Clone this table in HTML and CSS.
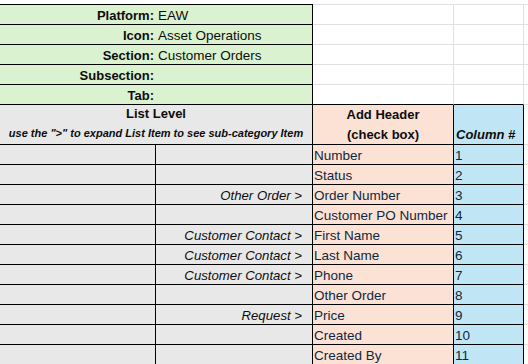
FILE: index.html
```html
<!DOCTYPE html>
<html>
<head>
<meta charset="utf-8">
<link rel="stylesheet" href="styles.css">
</head>
<body>
<div class="sheet">
  <div class="row meta first">
    <div class="c lab">Platform:</div><div class="c val">EAW</div><div class="c blank"></div><div class="c blank"></div><div class="c edge"></div>
  </div>
  <div class="row meta">
    <div class="c lab">Icon:</div><div class="c val">Asset Operations</div><div class="c blank"></div><div class="c blank"></div><div class="c edge"></div>
  </div>
  <div class="row meta">
    <div class="c lab">Section:</div><div class="c val">Customer Orders</div><div class="c blank"></div><div class="c blank"></div><div class="c edge"></div>
  </div>
  <div class="row meta">
    <div class="c lab">Subsection:</div><div class="c val"></div><div class="c blank"></div><div class="c blank"></div><div class="c edge"></div>
  </div>
  <div class="row meta last">
    <div class="c lab">Tab:</div><div class="c val"></div><div class="c blank"></div><div class="c blank"></div><div class="c edge"></div>
  </div>
  <div class="row head">
    <div class="c list-head">
      <div class="lh-title">List Level</div>
      <div class="lh-note">use the "&gt;" to expand List Item to see sub-category Item</div>
    </div>
    <div class="c add-head"><div>Add Header</div><div>(check box)</div></div>
    <div class="c num-head">Column #</div>
    <div class="c edge"></div>
  </div>

  <div class="row body"><div class="c g1"></div><div class="c g2"></div><div class="c hdr">Number</div><div class="c num">1</div><div class="c edge"></div></div>
  <div class="row body"><div class="c g1"></div><div class="c g2"></div><div class="c hdr">Status</div><div class="c num">2</div><div class="c edge"></div></div>
  <div class="row body"><div class="c g1"></div><div class="c g2">Other Order &gt;</div><div class="c hdr">Order Number</div><div class="c num">3</div><div class="c edge"></div></div>
  <div class="row body"><div class="c g1"></div><div class="c g2"></div><div class="c hdr">Customer PO Number</div><div class="c num">4</div><div class="c edge"></div></div>
  <div class="row body"><div class="c g1"></div><div class="c g2">Customer Contact &gt;</div><div class="c hdr">First Name</div><div class="c num">5</div><div class="c edge"></div></div>
  <div class="row body"><div class="c g1"></div><div class="c g2">Customer Contact &gt;</div><div class="c hdr">Last Name</div><div class="c num">6</div><div class="c edge"></div></div>
  <div class="row body"><div class="c g1"></div><div class="c g2">Customer Contact &gt;</div><div class="c hdr">Phone</div><div class="c num">7</div><div class="c edge"></div></div>
  <div class="row body"><div class="c g1"></div><div class="c g2"></div><div class="c hdr">Other Order</div><div class="c num">8</div><div class="c edge"></div></div>
  <div class="row body"><div class="c g1"></div><div class="c g2">Request &gt;</div><div class="c hdr">Price</div><div class="c num">9</div><div class="c edge"></div></div>
  <div class="row body"><div class="c g1"></div><div class="c g2"></div><div class="c hdr">Created</div><div class="c num">10</div><div class="c edge"></div></div>
  <div class="row body"><div class="c g1"></div><div class="c g2"></div><div class="c hdr">Created By</div><div class="c num">11</div><div class="c edge"></div></div>
</div>
</body>
</html>
```

FILE: styles.css
```css
html, body {
  margin: 0;
  padding: 0;
  background: #ffffff;
}

body {
  font-family: "Liberation Sans", Arial, sans-serif;
  color: #0d0d0d;
  overflow: hidden;
}

.sheet {
  padding-top: 4px;
}

.row {
  display: grid;
  grid-template-columns: 156px 157px 141px 70px 1fr;
  height: 20px;
}

.row.first {
  height: 21px;
}

.row.head {
  height: 40px;
}

.c {
  box-sizing: border-box;
  border-bottom: 1px solid #000;
  white-space: nowrap;
  overflow: hidden;
  font-size: 13.5px;
  line-height: 20px;
}

.meta .c,
.body .c {
  padding-top: 1px;
}

.first .c {
  border-top: 1px solid #000;
}

/* meta block */
.lab {
  background: #daf2d0;
  font-weight: bold;
  font-size: 13px;
  text-align: right;
  padding-right: 2px;
}

.val {
  background: #daf2d0;
  border-right: 1px solid #000;
  padding-left: 2px;
}

.blank {
  background: #fff;
  border-right: 1px solid #e1e1e1;
  border-bottom-color: #e1e1e1;
}

.first .blank,
.first .edge {
  border-top-color: #e1e1e1;
}

.meta.last .blank {
  border-bottom-color: #000;
}

.edge {
  background: #fff;
  border-bottom-color: #e1e1e1;
}

/* header row */
.list-head {
  grid-column: span 2;
  background: #e8e8e8;
  border-right: 1px solid #000;
  text-align: center;
}

.lh-title {
  font-weight: bold;
  font-size: 13px;
  line-height: 18px;
}

.lh-note {
  font-weight: bold;
  font-style: italic;
  font-size: 11px;
  line-height: 20px;
}

.add-head {
  background: #fbe2d5;
  border-right: 1px solid #000;
  text-align: center;
  font-weight: bold;
  font-size: 13px;
}

.num-head {
  background: #c0e6f5;
  border-right: 1px solid #000;
  font-weight: bold;
  font-style: italic;
  font-size: 13px;
  padding-top: 20px;
  padding-left: 2px;
}

/* body rows */
.g1 {
  background: #e8e8e8;
  border-right: 1px solid #000;
}

.g2 {
  background: #e8e8e8;
  border-right: 1px solid #000;
  font-style: italic;
  font-size: 13.2px;
  text-align: right;
  padding-right: 10px;
}

.hdr {
  background: #fbe2d5;
  border-right: 1px solid #000;
  padding-left: 1px;
  color: #0e2841;
}

.num {
  background: #c0e6f5;
  border-right: 1px solid #000;
  padding-left: 1px;
  color: #0e2841;
}
```
